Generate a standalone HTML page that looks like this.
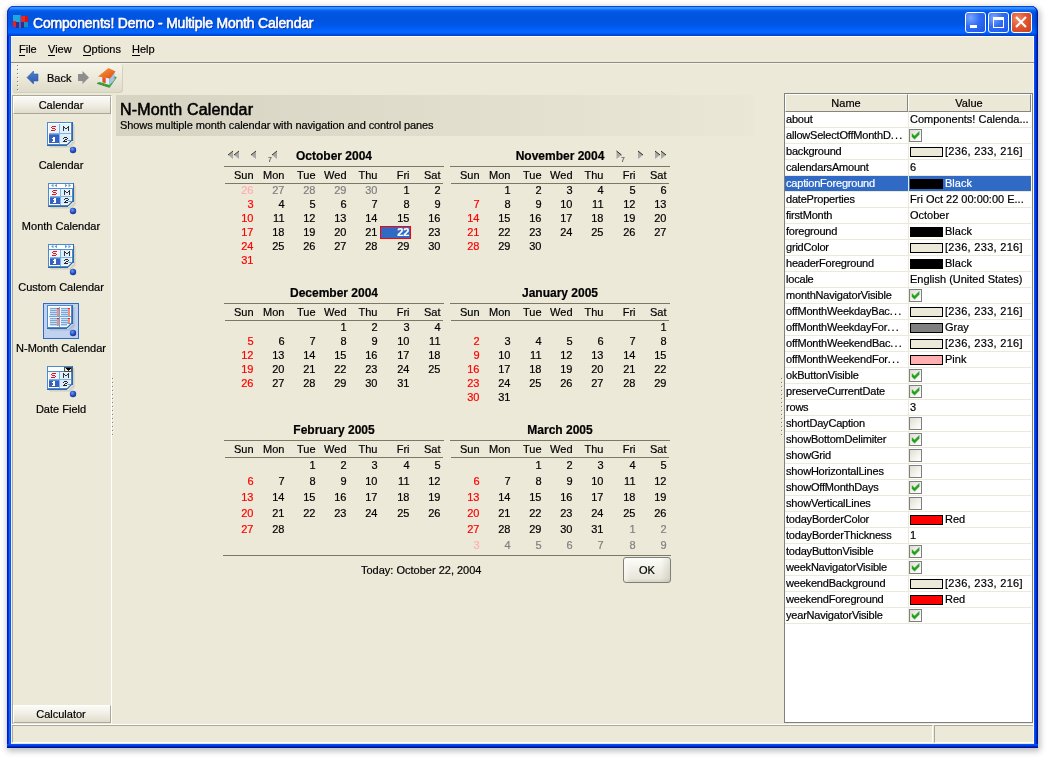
<!DOCTYPE html>
<html><head><meta charset="utf-8">
<style>
*{margin:0;padding:0;box-sizing:border-box}
html,body{width:1048px;height:758px;overflow:hidden;background:#fff;font-family:"Liberation Sans",sans-serif;font-size:11px;color:#000}
.a{position:absolute}
.t{position:absolute;white-space:nowrap;-webkit-text-stroke:0.2px currentColor}
svg{position:absolute;overflow:visible}
</style></head><body><div style="position:absolute;left:0;top:0;width:1048px;height:758px;will-change:transform">

<div class="a" style="left:7px;top:6px;width:1031px;height:742px;background:#0054e3;border-radius:7px 7px 0 0;box-shadow:1px 2px 6px 1px rgba(0,0,0,0.28)"></div>
<div class="a" style="left:7px;top:30px;width:4px;height:718px;background:linear-gradient(to right,#0018d8 0,#0018d8 1px,#0030e8 1px,#0030e8 2px,#1466f6 2px,#1466f6 3px,#0856ec 3px)"></div>
<div class="a" style="left:1034px;top:30px;width:4px;height:718px;background:linear-gradient(to right,#0850f8 0,#0850f8 1px,#0040e8 1px,#0040e8 2px,#0028c0 2px,#0028c0 3px,#001294 3px)"></div>
<div class="a" style="left:7px;top:744px;width:1031px;height:4px;background:linear-gradient(to bottom,#0850f8 0,#0850f8 1px,#0040e8 1px,#0040e8 2px,#0028c0 2px,#0028c0 3px,#001294 3px)"></div>
<div class="a" style="left:7px;top:6px;width:1031px;height:30px;border-radius:7px 7px 0 0;box-shadow:inset 1px 0 0 #0a2ad0,inset -1px 0 0 #0018a8;background:linear-gradient(to bottom,#0048e6 0px,#0048e6 1px,#3a94ff 1px,#3a94ff 2px,#2a84fc 3px,#0c66f2 4px,#0058e8 6px,#0054e0 8px,#0054e0 15px,#0057e8 19px,#005ef5 22px,#0066ff 25px,#0066ff 27px,#0052e2 28px,#003cc8 30px)"></div>
<div class="a" style="left:1034px;top:12px;width:4px;height:24px;background:linear-gradient(to right,rgba(0,40,200,0) 0,rgba(0,20,150,0.6) 4px)"></div>
<div class="a" style="left:11px;top:36px;width:1023px;height:708px;background:#ece9d8;border-left:1px solid #f4f1e2;border-right:1px solid #fbf9ee"></div>

<svg style="left:13px;top:15px" width="16" height="14" viewBox="0 0 16 14">
<rect x="0" y="0" width="7.5" height="7.5" fill="#1ea6de"/><rect x="8" y="1" width="7" height="6" fill="#f02424"/><rect x="12" y="1" width="3" height="6" fill="#c81818"/>
<rect x="0" y="6" width="3" height="6" fill="#ee1c1c"/><rect x="3" y="7" width="8" height="6" fill="#2a3090"/><rect x="6.5" y="7" width="1" height="6" fill="#8a90d0"/>
<rect x="11" y="7" width="4" height="5" fill="#1a8ec8"/></svg>
<div class="t" style="left:33px;top:15px;color:#fff;font-size:14px;line-height:17px;letter-spacing:-0.2px;-webkit-text-stroke:0.55px #fff;text-shadow:1px 1px 0 #0a2a9a">Components! Demo - Multiple Month Calendar</div>
<div class="a" style="left:965px;top:12px;width:21px;height:21px;border:1px solid #fff;border-radius:3px;background:radial-gradient(circle at 25% 25%,#7aa6ff 0,#2f6cf5 45%,#1d55e8 100%)"></div>
<div class="a" style="left:988px;top:12px;width:21px;height:21px;border:1px solid #fff;border-radius:3px;background:radial-gradient(circle at 25% 25%,#7aa6ff 0,#2f6cf5 45%,#1d55e8 100%)"></div>
<div class="a" style="left:1011px;top:12px;width:21px;height:21px;border:1px solid #fff;border-radius:3px;background:radial-gradient(circle at 30% 30%,#f08a6a 0,#e2562f 45%,#c8401c 100%)"></div>
<div class="a" style="left:970px;top:25px;width:7px;height:3px;background:#fff"></div>
<div class="a" style="left:993px;top:17px;width:11px;height:11px;border:1px solid #fff;border-top-width:3px"></div>
<svg style="left:1011px;top:12px" width="21" height="21" viewBox="0 0 21 21"><path d="M5.8 5.8 L14.2 14.2 M14.2 5.8 L5.8 14.2" stroke="#fff" stroke-width="2.2" stroke-linecap="square"/></svg>
<div class="a" style="left:11px;top:36px;width:1023px;height:1px;background:#fff"></div>
<div class="t" style="left:19px;top:42px;line-height:14px;">File</div>
<div class="a" style="left:19px;top:55px;width:6px;height:1px;background:#000"></div>
<div class="t" style="left:48px;top:42px;line-height:14px;">View</div>
<div class="a" style="left:48px;top:55px;width:7px;height:1px;background:#000"></div>
<div class="t" style="left:83px;top:42px;line-height:14px;">Options</div>
<div class="a" style="left:83px;top:55px;width:8px;height:1px;background:#000"></div>
<div class="t" style="left:132px;top:42px;line-height:14px;">Help</div>
<div class="a" style="left:132px;top:55px;width:8px;height:1px;background:#000"></div>
<div class="a" style="left:11px;top:62px;width:1023px;height:1px;background:#8f8d81"></div>
<div class="a" style="left:11px;top:63px;width:1023px;height:1px;background:#f4f3ee"></div>
<div class="a" style="left:12px;top:64px;width:111px;height:29px;border-radius:4px;background:linear-gradient(to bottom,#f5f4ea 0,#eeebdd 40%,#dedac8 100%);box-shadow:inset -1px -1px 0 #d4d0c0"></div>
<div class="a" style="left:17px;top:65px;width:1px;height:1px;background:#777"></div>
<div class="a" style="left:18px;top:66px;width:1px;height:1px;background:#fff"></div>
<div class="a" style="left:17px;top:69px;width:1px;height:1px;background:#777"></div>
<div class="a" style="left:18px;top:70px;width:1px;height:1px;background:#fff"></div>
<div class="a" style="left:17px;top:73px;width:1px;height:1px;background:#777"></div>
<div class="a" style="left:18px;top:74px;width:1px;height:1px;background:#fff"></div>
<div class="a" style="left:17px;top:77px;width:1px;height:1px;background:#777"></div>
<div class="a" style="left:18px;top:78px;width:1px;height:1px;background:#fff"></div>
<div class="a" style="left:17px;top:81px;width:1px;height:1px;background:#777"></div>
<div class="a" style="left:18px;top:82px;width:1px;height:1px;background:#fff"></div>
<div class="a" style="left:17px;top:85px;width:1px;height:1px;background:#777"></div>
<div class="a" style="left:18px;top:86px;width:1px;height:1px;background:#fff"></div>
<div class="a" style="left:17px;top:89px;width:1px;height:1px;background:#777"></div>
<div class="a" style="left:18px;top:90px;width:1px;height:1px;background:#fff"></div>
<svg style="left:26px;top:70px" width="14" height="16" viewBox="0 0 14 16"><defs><linearGradient id="ab" x1="0" y1="0" x2="0" y2="1"><stop offset="0" stop-color="#4a7fd0"/><stop offset="1" stop-color="#2d5aa8"/></linearGradient></defs><path d="M1 7.5 L7.5 1 L7.5 4 L12 4 L12 11 L7.5 11 L7.5 14 Z" fill="url(#ab)" stroke="#2d5aa8" stroke-width="0.6"/></svg>
<div class="t" style="left:47px;top:71px;line-height:14px;">Back</div>
<svg style="left:77px;top:70px" width="14" height="16" viewBox="0 0 14 16"><path d="M1 4 L5.5 4 L5.5 1 L12 7.5 L5.5 14 L5.5 11 L1 11 Z" fill="#8e8e8e"/></svg>
<svg style="left:96px;top:66px" width="22" height="22" viewBox="0 0 22 22">
<defs><linearGradient id="roof" x1="0" y1="0" x2="1" y2="1"><stop offset="0" stop-color="#f8a040"/><stop offset="1" stop-color="#e04a10"/></linearGradient></defs>
<path d="M1 17 L13.5 21 L20.5 11 L17 10 Z" fill="#2ea52e"/><path d="M1 17 L13.5 21 L13.5 21.8 L1 17.8 Z" fill="#157015"/><path d="M13.5 21 L20.5 11 L20.5 11.8 L13.5 21.8 Z" fill="#1a7a1a"/>
<path d="M3.5 10 L13.5 12 L13.5 19 L3.5 16 Z" fill="#e4ebfa"/>
<path d="M13.5 12 L18.5 6 L18.5 14 L13.5 19 Z" fill="#a9c2ea"/>
<path d="M6.4 11 L9.7 11.6 L9.7 17.2 L6.4 16.4 Z" fill="#ea5412"/>
<path d="M2 10.5 L12.5 2 L19.5 5.5 L14 12.5 Z" fill="url(#roof)"/>
</svg>
<div class="a" style="left:12px;top:95px;width:100px;height:630px;border-left:1px solid #aca899;border-top:1px solid #aca899;border-right:1px solid #fff;border-bottom:1px solid #fff"></div>
<div class="a" style="left:13px;top:96px;width:98px;height:18px;border-top:1px solid #fff;border-left:1px solid #fff;border-bottom:1px solid #aca899;border-right:1px solid #aca899;background:linear-gradient(to bottom,#fbfaf6 0,#f0eee4 50%,#e0dccb 100%)"></div>
<div class="t" style="left:12.0px;width:98px;top:98px;text-align:center;line-height:14px;">Calendar</div>
<div class="a" style="left:13px;top:705px;width:98px;height:18px;border-top:1px solid #fff;border-left:1px solid #fff;border-bottom:1px solid #aca899;border-right:1px solid #aca899;background:linear-gradient(to bottom,#fbfaf6 0,#f0eee4 50%,#e0dccb 100%)"></div>
<div class="t" style="left:12.0px;width:98px;top:707px;text-align:center;line-height:14px;">Calculator</div>
<svg style="left:46px;top:121px" width="30" height="28" viewBox="-1 -1 30 28" shape-rendering="crispEdges"><path d="M2 24 H21 L26 19 V2 H27 V20 L22 25 H2 Z" fill="#000" opacity="0.10"/><path d="M3 25 H22 L27 20 V3 H28 V21 L23 26 H3 Z" fill="#000" opacity="0.06"/><path d="M0 0 H26 V18 L20 24 H0 Z" fill="#2f6aa8"/><path d="M0 0 H25 V18 L20 23 H0 Z" fill="#4a8ad0"/><path d="M1 1 H24 V18 L20 22 H1 Z" fill="#ffffff"/><path d="M2 2 H23 V18 L20 21 H2 Z" fill="#eaf4fc"/><rect x="13" y="2" width="10" height="9" fill="#e2f0fb"/><rect x="13" y="12" width="10" height="9" fill="#dcecfa"/><rect x="12" y="2" width="1" height="20" fill="#7db4e2"/><rect x="2" y="11" width="22" height="1" fill="#7db4e2"/><rect x="2" y="12" width="10" height="9" fill="#3562c0"/><rect x="2" y="12" width="10" height="1" fill="#5a86d8"/><rect x="5" y="4" width="1" height="1" fill="#ee1010"/><rect x="6" y="4" width="1" height="1" fill="#ee1010"/><rect x="7" y="4" width="1" height="1" fill="#ee1010"/><rect x="8" y="4" width="1" height="1" fill="#ee1010"/><rect x="4" y="5" width="1" height="1" fill="#ee1010"/><rect x="5" y="6" width="1" height="1" fill="#ee1010"/><rect x="6" y="6" width="1" height="1" fill="#ee1010"/><rect x="7" y="6" width="1" height="1" fill="#ee1010"/><rect x="8" y="7" width="1" height="1" fill="#ee1010"/><rect x="4" y="8" width="1" height="1" fill="#ee1010"/><rect x="5" y="8" width="1" height="1" fill="#ee1010"/><rect x="6" y="8" width="1" height="1" fill="#ee1010"/><rect x="7" y="8" width="1" height="1" fill="#ee1010"/><rect x="16" y="4" width="1" height="1" fill="#333333"/><rect x="21" y="4" width="1" height="1" fill="#333333"/><rect x="16" y="5" width="1" height="1" fill="#333333"/><rect x="17" y="5" width="1" height="1" fill="#333333"/><rect x="20" y="5" width="1" height="1" fill="#333333"/><rect x="21" y="5" width="1" height="1" fill="#333333"/><rect x="16" y="6" width="1" height="1" fill="#333333"/><rect x="18" y="6" width="1" height="1" fill="#333333"/><rect x="19" y="6" width="1" height="1" fill="#333333"/><rect x="21" y="6" width="1" height="1" fill="#333333"/><rect x="16" y="7" width="1" height="1" fill="#333333"/><rect x="21" y="7" width="1" height="1" fill="#333333"/><rect x="16" y="8" width="1" height="1" fill="#333333"/><rect x="21" y="8" width="1" height="1" fill="#333333"/><rect x="6" y="15" width="1" height="1" fill="#ffffff"/><rect x="7" y="15" width="1" height="1" fill="#ffffff"/><rect x="5" y="16" width="1" height="1" fill="#ffffff"/><rect x="6" y="16" width="1" height="1" fill="#ffffff"/><rect x="7" y="16" width="1" height="1" fill="#ffffff"/><rect x="6" y="17" width="1" height="1" fill="#ffffff"/><rect x="7" y="17" width="1" height="1" fill="#ffffff"/><rect x="6" y="18" width="1" height="1" fill="#ffffff"/><rect x="7" y="18" width="1" height="1" fill="#ffffff"/><rect x="5" y="19" width="1" height="1" fill="#ffffff"/><rect x="6" y="19" width="1" height="1" fill="#ffffff"/><rect x="7" y="19" width="1" height="1" fill="#ffffff"/><rect x="17" y="15" width="1" height="1" fill="#222222"/><rect x="18" y="15" width="1" height="1" fill="#222222"/><rect x="19" y="15" width="1" height="1" fill="#222222"/><rect x="16" y="16" width="1" height="1" fill="#222222"/><rect x="20" y="16" width="1" height="1" fill="#222222"/><rect x="18" y="17" width="1" height="1" fill="#222222"/><rect x="19" y="17" width="1" height="1" fill="#222222"/><rect x="17" y="18" width="1" height="1" fill="#222222"/><rect x="16" y="19" width="1" height="1" fill="#222222"/><rect x="17" y="19" width="1" height="1" fill="#222222"/><rect x="18" y="19" width="1" height="1" fill="#222222"/><rect x="19" y="19" width="1" height="1" fill="#222222"/><rect x="20" y="19" width="1" height="1" fill="#222222"/><path d="M20 24 L20 19 L25 19 Z" fill="#ffffff"/><path d="M20 23 L25 18" stroke="#2f6aa8" stroke-width="1.2" shape-rendering="auto"/><path d="M20.5 18.5 H24" stroke="#6a9ad0" stroke-width="1" shape-rendering="auto"/></svg>
<svg style="left:69px;top:146px" width="8" height="8" viewBox="0 0 8 8"><defs><radialGradient id="dg73150" cx="0.4" cy="0.35" r="0.6"><stop offset="0" stop-color="#6f9cf0"/><stop offset="0.6" stop-color="#2a56c8"/><stop offset="1" stop-color="#1a3aa0"/></radialGradient></defs><circle cx="4" cy="4" r="3.2" fill="url(#dg73150)"/></svg>
<div class="t" style="left:12.0px;width:98px;top:158px;text-align:center;line-height:14px;">Calendar</div>
<svg style="left:47px;top:182px" width="30" height="28" viewBox="-1 -1 30 28" shape-rendering="crispEdges"><path d="M2 24 H21 L26 19 V2 H27 V20 L22 25 H2 Z" fill="#000" opacity="0.10"/><path d="M3 25 H22 L27 20 V3 H28 V21 L23 26 H3 Z" fill="#000" opacity="0.06"/><path d="M0 0 H26 V18 L20 24 H0 Z" fill="#2f6aa8"/><path d="M0 0 H25 V18 L20 23 H0 Z" fill="#4a8ad0"/><path d="M1 1 H24 V18 L20 22 H1 Z" fill="#ffffff"/><path d="M2 2 H23 V18 L20 21 H2 Z" fill="#eaf4fc"/><rect x="1" y="1" width="24" height="4" fill="#ffffff"/><path d="M3 2.5 L5.5 0.8 L5.5 4.2 Z M6.5 2.5 L9 0.8 L9 4.2 Z M17 0.8 L19.5 2.5 L17 4.2 Z M20.5 0.8 L23 2.5 L20.5 4.2 Z" fill="#6c9bd2" shape-rendering="auto"/><rect x="1" y="5" width="24" height="1" fill="#4f8fd0"/><rect x="13" y="6" width="10" height="7" fill="#e2f0fb"/><rect x="13" y="14" width="10" height="7" fill="#dcecfa"/><rect x="12" y="6" width="1" height="16" fill="#7db4e2"/><rect x="2" y="13" width="22" height="1" fill="#7db4e2"/><rect x="2" y="14" width="10" height="7" fill="#3562c0"/><rect x="2" y="14" width="10" height="1" fill="#5a86d8"/><rect x="5" y="7" width="1" height="1" fill="#ee1010"/><rect x="6" y="7" width="1" height="1" fill="#ee1010"/><rect x="7" y="7" width="1" height="1" fill="#ee1010"/><rect x="8" y="7" width="1" height="1" fill="#ee1010"/><rect x="4" y="8" width="1" height="1" fill="#ee1010"/><rect x="5" y="9" width="1" height="1" fill="#ee1010"/><rect x="6" y="9" width="1" height="1" fill="#ee1010"/><rect x="7" y="9" width="1" height="1" fill="#ee1010"/><rect x="8" y="10" width="1" height="1" fill="#ee1010"/><rect x="4" y="11" width="1" height="1" fill="#ee1010"/><rect x="5" y="11" width="1" height="1" fill="#ee1010"/><rect x="6" y="11" width="1" height="1" fill="#ee1010"/><rect x="7" y="11" width="1" height="1" fill="#ee1010"/><rect x="16" y="7" width="1" height="1" fill="#333333"/><rect x="21" y="7" width="1" height="1" fill="#333333"/><rect x="16" y="8" width="1" height="1" fill="#333333"/><rect x="17" y="8" width="1" height="1" fill="#333333"/><rect x="20" y="8" width="1" height="1" fill="#333333"/><rect x="21" y="8" width="1" height="1" fill="#333333"/><rect x="16" y="9" width="1" height="1" fill="#333333"/><rect x="18" y="9" width="1" height="1" fill="#333333"/><rect x="19" y="9" width="1" height="1" fill="#333333"/><rect x="21" y="9" width="1" height="1" fill="#333333"/><rect x="16" y="10" width="1" height="1" fill="#333333"/><rect x="21" y="10" width="1" height="1" fill="#333333"/><rect x="16" y="11" width="1" height="1" fill="#333333"/><rect x="21" y="11" width="1" height="1" fill="#333333"/><rect x="6" y="15" width="1" height="1" fill="#ffffff"/><rect x="7" y="15" width="1" height="1" fill="#ffffff"/><rect x="5" y="16" width="1" height="1" fill="#ffffff"/><rect x="6" y="16" width="1" height="1" fill="#ffffff"/><rect x="7" y="16" width="1" height="1" fill="#ffffff"/><rect x="6" y="17" width="1" height="1" fill="#ffffff"/><rect x="7" y="17" width="1" height="1" fill="#ffffff"/><rect x="6" y="18" width="1" height="1" fill="#ffffff"/><rect x="7" y="18" width="1" height="1" fill="#ffffff"/><rect x="5" y="19" width="1" height="1" fill="#ffffff"/><rect x="6" y="19" width="1" height="1" fill="#ffffff"/><rect x="7" y="19" width="1" height="1" fill="#ffffff"/><rect x="17" y="15" width="1" height="1" fill="#222222"/><rect x="18" y="15" width="1" height="1" fill="#222222"/><rect x="19" y="15" width="1" height="1" fill="#222222"/><rect x="16" y="16" width="1" height="1" fill="#222222"/><rect x="20" y="16" width="1" height="1" fill="#222222"/><rect x="18" y="17" width="1" height="1" fill="#222222"/><rect x="19" y="17" width="1" height="1" fill="#222222"/><rect x="17" y="18" width="1" height="1" fill="#222222"/><rect x="16" y="19" width="1" height="1" fill="#222222"/><rect x="17" y="19" width="1" height="1" fill="#222222"/><rect x="18" y="19" width="1" height="1" fill="#222222"/><rect x="19" y="19" width="1" height="1" fill="#222222"/><rect x="20" y="19" width="1" height="1" fill="#222222"/><path d="M20 24 L20 19 L25 19 Z" fill="#ffffff"/><path d="M20 23 L25 18" stroke="#2f6aa8" stroke-width="1.2" shape-rendering="auto"/><path d="M20.5 18.5 H24" stroke="#6a9ad0" stroke-width="1" shape-rendering="auto"/></svg>
<svg style="left:69px;top:207px" width="8" height="8" viewBox="0 0 8 8"><defs><radialGradient id="dg73211" cx="0.4" cy="0.35" r="0.6"><stop offset="0" stop-color="#6f9cf0"/><stop offset="0.6" stop-color="#2a56c8"/><stop offset="1" stop-color="#1a3aa0"/></radialGradient></defs><circle cx="4" cy="4" r="3.2" fill="url(#dg73211)"/></svg>
<div class="t" style="left:12.0px;width:98px;top:219px;text-align:center;line-height:14px;">Month Calendar</div>
<svg style="left:47px;top:243px" width="30" height="28" viewBox="-1 -1 30 28" shape-rendering="crispEdges"><path d="M2 24 H21 L26 19 V2 H27 V20 L22 25 H2 Z" fill="#000" opacity="0.10"/><path d="M3 25 H22 L27 20 V3 H28 V21 L23 26 H3 Z" fill="#000" opacity="0.06"/><path d="M0 0 H26 V18 L20 24 H0 Z" fill="#2f6aa8"/><path d="M0 0 H25 V18 L20 23 H0 Z" fill="#4a8ad0"/><path d="M1 1 H24 V18 L20 22 H1 Z" fill="#ffffff"/><path d="M2 2 H23 V18 L20 21 H2 Z" fill="#eaf4fc"/><rect x="1" y="1" width="24" height="4" fill="#ffffff"/><path d="M3 2.5 L5.5 0.8 L5.5 4.2 Z M6.5 2.5 L9 0.8 L9 4.2 Z M17 0.8 L19.5 2.5 L17 4.2 Z M20.5 0.8 L23 2.5 L20.5 4.2 Z" fill="#6c9bd2" shape-rendering="auto"/><rect x="1" y="5" width="24" height="1" fill="#4f8fd0"/><rect x="13" y="6" width="10" height="7" fill="#e2f0fb"/><rect x="13" y="14" width="10" height="7" fill="#dcecfa"/><rect x="12" y="6" width="1" height="16" fill="#7db4e2"/><rect x="2" y="13" width="22" height="1" fill="#7db4e2"/><rect x="2" y="14" width="10" height="7" fill="#3562c0"/><rect x="2" y="14" width="10" height="1" fill="#5a86d8"/><rect x="5" y="7" width="1" height="1" fill="#ee1010"/><rect x="6" y="7" width="1" height="1" fill="#ee1010"/><rect x="7" y="7" width="1" height="1" fill="#ee1010"/><rect x="8" y="7" width="1" height="1" fill="#ee1010"/><rect x="4" y="8" width="1" height="1" fill="#ee1010"/><rect x="5" y="9" width="1" height="1" fill="#ee1010"/><rect x="6" y="9" width="1" height="1" fill="#ee1010"/><rect x="7" y="9" width="1" height="1" fill="#ee1010"/><rect x="8" y="10" width="1" height="1" fill="#ee1010"/><rect x="4" y="11" width="1" height="1" fill="#ee1010"/><rect x="5" y="11" width="1" height="1" fill="#ee1010"/><rect x="6" y="11" width="1" height="1" fill="#ee1010"/><rect x="7" y="11" width="1" height="1" fill="#ee1010"/><rect x="16" y="7" width="1" height="1" fill="#333333"/><rect x="21" y="7" width="1" height="1" fill="#333333"/><rect x="16" y="8" width="1" height="1" fill="#333333"/><rect x="17" y="8" width="1" height="1" fill="#333333"/><rect x="20" y="8" width="1" height="1" fill="#333333"/><rect x="21" y="8" width="1" height="1" fill="#333333"/><rect x="16" y="9" width="1" height="1" fill="#333333"/><rect x="18" y="9" width="1" height="1" fill="#333333"/><rect x="19" y="9" width="1" height="1" fill="#333333"/><rect x="21" y="9" width="1" height="1" fill="#333333"/><rect x="16" y="10" width="1" height="1" fill="#333333"/><rect x="21" y="10" width="1" height="1" fill="#333333"/><rect x="16" y="11" width="1" height="1" fill="#333333"/><rect x="21" y="11" width="1" height="1" fill="#333333"/><rect x="6" y="15" width="1" height="1" fill="#ffffff"/><rect x="7" y="15" width="1" height="1" fill="#ffffff"/><rect x="5" y="16" width="1" height="1" fill="#ffffff"/><rect x="6" y="16" width="1" height="1" fill="#ffffff"/><rect x="7" y="16" width="1" height="1" fill="#ffffff"/><rect x="6" y="17" width="1" height="1" fill="#ffffff"/><rect x="7" y="17" width="1" height="1" fill="#ffffff"/><rect x="6" y="18" width="1" height="1" fill="#ffffff"/><rect x="7" y="18" width="1" height="1" fill="#ffffff"/><rect x="5" y="19" width="1" height="1" fill="#ffffff"/><rect x="6" y="19" width="1" height="1" fill="#ffffff"/><rect x="7" y="19" width="1" height="1" fill="#ffffff"/><rect x="17" y="15" width="1" height="1" fill="#222222"/><rect x="18" y="15" width="1" height="1" fill="#222222"/><rect x="19" y="15" width="1" height="1" fill="#222222"/><rect x="16" y="16" width="1" height="1" fill="#222222"/><rect x="20" y="16" width="1" height="1" fill="#222222"/><rect x="18" y="17" width="1" height="1" fill="#222222"/><rect x="19" y="17" width="1" height="1" fill="#222222"/><rect x="17" y="18" width="1" height="1" fill="#222222"/><rect x="16" y="19" width="1" height="1" fill="#222222"/><rect x="17" y="19" width="1" height="1" fill="#222222"/><rect x="18" y="19" width="1" height="1" fill="#222222"/><rect x="19" y="19" width="1" height="1" fill="#222222"/><rect x="20" y="19" width="1" height="1" fill="#222222"/><path d="M20 24 L20 19 L25 19 Z" fill="#ffffff"/><path d="M20 23 L25 18" stroke="#2f6aa8" stroke-width="1.2" shape-rendering="auto"/><path d="M20.5 18.5 H24" stroke="#6a9ad0" stroke-width="1" shape-rendering="auto"/></svg>
<svg style="left:69px;top:268px" width="8" height="8" viewBox="0 0 8 8"><defs><radialGradient id="dg73272" cx="0.4" cy="0.35" r="0.6"><stop offset="0" stop-color="#6f9cf0"/><stop offset="0.6" stop-color="#2a56c8"/><stop offset="1" stop-color="#1a3aa0"/></radialGradient></defs><circle cx="4" cy="4" r="3.2" fill="url(#dg73272)"/></svg>
<div class="t" style="left:12.0px;width:98px;top:280px;text-align:center;line-height:14px;">Custom Calendar</div>
<div class="a" style="left:43px;top:303px;width:36px;height:36px;background:#c1d2ee;border:1px solid #316ac5"></div>
<svg style="left:46px;top:304px" width="30" height="28" viewBox="-1 -1 30 28" shape-rendering="crispEdges"><path d="M2 24 H21 L26 19 V2 H27 V20 L22 25 H2 Z" fill="#000" opacity="0.10"/><path d="M3 25 H22 L27 20 V3 H28 V21 L23 26 H3 Z" fill="#000" opacity="0.06"/><path d="M0 0 H26 V18 L20 24 H0 Z" fill="#2f6aa8"/><path d="M0 0 H25 V18 L20 23 H0 Z" fill="#4a8ad0"/><path d="M1 1 H24 V18 L20 22 H1 Z" fill="#ffffff"/><path d="M2 2 H23 V18 L20 21 H2 Z" fill="#eaf4fc"/><rect x="12" y="2" width="1" height="20" fill="#6aa6dc"/><rect x="2" y="11" width="22" height="1" fill="#6aa6dc"/><rect x="3" y="3" width="7" height="1" fill="#7fa8d4"/><rect x="3" y="4" width="7" height="1" fill="#c4dcf0"/><rect x="3" y="5" width="7" height="1" fill="#7fa8d4"/><rect x="3" y="6" width="7" height="1" fill="#c4dcf0"/><rect x="3" y="7" width="7" height="1" fill="#7fa8d4"/><rect x="3" y="8" width="7" height="1" fill="#c4dcf0"/><rect x="3" y="9" width="7" height="1" fill="#7fa8d4"/><rect x="3" y="10" width="7" height="1" fill="#c4dcf0"/><rect x="10" y="3" width="2" height="8" fill="#f88a7a"/><rect x="10" y="3" width="2" height="1" fill="#ee2020"/><rect x="14" y="3" width="7" height="1" fill="#7fa8d4"/><rect x="14" y="4" width="7" height="1" fill="#c4dcf0"/><rect x="14" y="5" width="7" height="1" fill="#7fa8d4"/><rect x="14" y="6" width="7" height="1" fill="#c4dcf0"/><rect x="14" y="7" width="7" height="1" fill="#7fa8d4"/><rect x="14" y="8" width="7" height="1" fill="#c4dcf0"/><rect x="14" y="9" width="7" height="1" fill="#7fa8d4"/><rect x="14" y="10" width="7" height="1" fill="#c4dcf0"/><rect x="21" y="3" width="2" height="8" fill="#f88a7a"/><rect x="21" y="3" width="2" height="1" fill="#ee2020"/><rect x="3" y="13" width="7" height="1" fill="#7fa8d4"/><rect x="3" y="14" width="7" height="1" fill="#c4dcf0"/><rect x="3" y="15" width="7" height="1" fill="#7fa8d4"/><rect x="3" y="16" width="7" height="1" fill="#c4dcf0"/><rect x="3" y="17" width="7" height="1" fill="#7fa8d4"/><rect x="3" y="18" width="7" height="1" fill="#c4dcf0"/><rect x="3" y="19" width="7" height="1" fill="#7fa8d4"/><rect x="3" y="20" width="7" height="1" fill="#c4dcf0"/><rect x="10" y="13" width="2" height="8" fill="#f88a7a"/><rect x="10" y="13" width="2" height="1" fill="#ee2020"/><rect x="14" y="13" width="7" height="1" fill="#7fa8d4"/><rect x="14" y="14" width="7" height="1" fill="#c4dcf0"/><rect x="14" y="15" width="7" height="1" fill="#7fa8d4"/><rect x="14" y="16" width="7" height="1" fill="#c4dcf0"/><rect x="14" y="17" width="7" height="1" fill="#7fa8d4"/><rect x="14" y="18" width="7" height="1" fill="#c4dcf0"/><rect x="14" y="19" width="7" height="1" fill="#7fa8d4"/><rect x="14" y="20" width="7" height="1" fill="#c4dcf0"/><rect x="21" y="13" width="2" height="8" fill="#f88a7a"/><rect x="21" y="13" width="2" height="1" fill="#ee2020"/><path d="M20 24 L20 19 L25 19 Z" fill="#ffffff"/><path d="M20 23 L25 18" stroke="#2f6aa8" stroke-width="1.2" shape-rendering="auto"/><path d="M20.5 18.5 H24" stroke="#6a9ad0" stroke-width="1" shape-rendering="auto"/></svg>
<svg style="left:69px;top:329px" width="8" height="8" viewBox="0 0 8 8"><defs><radialGradient id="dg73333" cx="0.4" cy="0.35" r="0.6"><stop offset="0" stop-color="#6f9cf0"/><stop offset="0.6" stop-color="#2a56c8"/><stop offset="1" stop-color="#1a3aa0"/></radialGradient></defs><circle cx="4" cy="4" r="3.2" fill="url(#dg73333)"/></svg>
<div class="t" style="left:12.0px;width:98px;top:341px;text-align:center;line-height:14px;">N-Month Calendar</div>
<svg style="left:46px;top:365px" width="30" height="28" viewBox="-1 -1 30 28" shape-rendering="crispEdges"><path d="M2 24 H21 L26 19 V2 H27 V20 L22 25 H2 Z" fill="#000" opacity="0.10"/><path d="M3 25 H22 L27 20 V3 H28 V21 L23 26 H3 Z" fill="#000" opacity="0.06"/><path d="M0 0 H26 V18 L20 24 H0 Z" fill="#2f6aa8"/><path d="M0 0 H25 V18 L20 23 H0 Z" fill="#4a8ad0"/><path d="M1 1 H24 V18 L20 22 H1 Z" fill="#ffffff"/><path d="M2 2 H23 V18 L20 21 H2 Z" fill="#eaf4fc"/><rect x="1" y="1" width="24" height="4" fill="#ffffff"/><rect x="17" y="1" width="8" height="5" fill="#505050"/><rect x="18" y="2" width="6" height="3" fill="#e4e4de"/><rect x="19" y="2" width="5" height="1" fill="#000"/><rect x="20" y="3" width="3" height="1" fill="#000"/><rect x="21" y="4" width="1" height="1" fill="#222"/><rect x="1" y="5" width="16" height="1" fill="#4f8fd0"/><rect x="13" y="6" width="10" height="7" fill="#e2f0fb"/><rect x="13" y="14" width="10" height="7" fill="#dcecfa"/><rect x="12" y="6" width="1" height="16" fill="#7db4e2"/><rect x="2" y="13" width="22" height="1" fill="#7db4e2"/><rect x="2" y="14" width="10" height="7" fill="#3562c0"/><rect x="2" y="14" width="10" height="1" fill="#5a86d8"/><rect x="5" y="7" width="1" height="1" fill="#ee1010"/><rect x="6" y="7" width="1" height="1" fill="#ee1010"/><rect x="7" y="7" width="1" height="1" fill="#ee1010"/><rect x="8" y="7" width="1" height="1" fill="#ee1010"/><rect x="4" y="8" width="1" height="1" fill="#ee1010"/><rect x="5" y="9" width="1" height="1" fill="#ee1010"/><rect x="6" y="9" width="1" height="1" fill="#ee1010"/><rect x="7" y="9" width="1" height="1" fill="#ee1010"/><rect x="8" y="10" width="1" height="1" fill="#ee1010"/><rect x="4" y="11" width="1" height="1" fill="#ee1010"/><rect x="5" y="11" width="1" height="1" fill="#ee1010"/><rect x="6" y="11" width="1" height="1" fill="#ee1010"/><rect x="7" y="11" width="1" height="1" fill="#ee1010"/><rect x="16" y="7" width="1" height="1" fill="#333333"/><rect x="21" y="7" width="1" height="1" fill="#333333"/><rect x="16" y="8" width="1" height="1" fill="#333333"/><rect x="17" y="8" width="1" height="1" fill="#333333"/><rect x="20" y="8" width="1" height="1" fill="#333333"/><rect x="21" y="8" width="1" height="1" fill="#333333"/><rect x="16" y="9" width="1" height="1" fill="#333333"/><rect x="18" y="9" width="1" height="1" fill="#333333"/><rect x="19" y="9" width="1" height="1" fill="#333333"/><rect x="21" y="9" width="1" height="1" fill="#333333"/><rect x="16" y="10" width="1" height="1" fill="#333333"/><rect x="21" y="10" width="1" height="1" fill="#333333"/><rect x="16" y="11" width="1" height="1" fill="#333333"/><rect x="21" y="11" width="1" height="1" fill="#333333"/><rect x="6" y="15" width="1" height="1" fill="#ffffff"/><rect x="7" y="15" width="1" height="1" fill="#ffffff"/><rect x="5" y="16" width="1" height="1" fill="#ffffff"/><rect x="6" y="16" width="1" height="1" fill="#ffffff"/><rect x="7" y="16" width="1" height="1" fill="#ffffff"/><rect x="6" y="17" width="1" height="1" fill="#ffffff"/><rect x="7" y="17" width="1" height="1" fill="#ffffff"/><rect x="6" y="18" width="1" height="1" fill="#ffffff"/><rect x="7" y="18" width="1" height="1" fill="#ffffff"/><rect x="5" y="19" width="1" height="1" fill="#ffffff"/><rect x="6" y="19" width="1" height="1" fill="#ffffff"/><rect x="7" y="19" width="1" height="1" fill="#ffffff"/><rect x="17" y="15" width="1" height="1" fill="#222222"/><rect x="18" y="15" width="1" height="1" fill="#222222"/><rect x="19" y="15" width="1" height="1" fill="#222222"/><rect x="16" y="16" width="1" height="1" fill="#222222"/><rect x="20" y="16" width="1" height="1" fill="#222222"/><rect x="18" y="17" width="1" height="1" fill="#222222"/><rect x="19" y="17" width="1" height="1" fill="#222222"/><rect x="17" y="18" width="1" height="1" fill="#222222"/><rect x="16" y="19" width="1" height="1" fill="#222222"/><rect x="17" y="19" width="1" height="1" fill="#222222"/><rect x="18" y="19" width="1" height="1" fill="#222222"/><rect x="19" y="19" width="1" height="1" fill="#222222"/><rect x="20" y="19" width="1" height="1" fill="#222222"/><path d="M20 24 L20 19 L25 19 Z" fill="#ffffff"/><path d="M20 23 L25 18" stroke="#2f6aa8" stroke-width="1.2" shape-rendering="auto"/><path d="M20.5 18.5 H24" stroke="#6a9ad0" stroke-width="1" shape-rendering="auto"/></svg>
<svg style="left:69px;top:390px" width="8" height="8" viewBox="0 0 8 8"><defs><radialGradient id="dg73394" cx="0.4" cy="0.35" r="0.6"><stop offset="0" stop-color="#6f9cf0"/><stop offset="0.6" stop-color="#2a56c8"/><stop offset="1" stop-color="#1a3aa0"/></radialGradient></defs><circle cx="4" cy="4" r="3.2" fill="url(#dg73394)"/></svg>
<div class="t" style="left:12.0px;width:98px;top:402px;text-align:center;line-height:14px;">Date Field</div>
<div class="a" style="left:116px;top:95px;width:638px;height:41px;background:linear-gradient(to right,#d7d3c2 0,#eae7d6 100%)"></div>
<div class="t" style="left:120px;top:100px;font-size:16px;line-height:19px;letter-spacing:0.15px;-webkit-text-stroke:0.55px #000">N-Month Calendar</div>
<div class="t" style="left:120px;top:118px;line-height:14px;letter-spacing:-0.09px">Shows multiple month calendar with navigation and control panes</div>
<div class="t" style="left:234.0px;width:200px;top:149px;text-align:center;font-weight:bold;font-size:12px;line-height:15px;">October 2004</div>
<div class="a" style="left:224px;top:166px;width:220px;height:1px;background:#7b7868"></div>
<div class="t" style="right:794.5px;top:168px;text-align:right;line-height:14px;">Sun</div>
<div class="t" style="right:763.5px;top:168px;text-align:right;line-height:14px;">Mon</div>
<div class="t" style="right:732.5px;top:168px;text-align:right;line-height:14px;">Tue</div>
<div class="t" style="right:701.5px;top:168px;text-align:right;line-height:14px;">Wed</div>
<div class="t" style="right:670.5px;top:168px;text-align:right;line-height:14px;">Thu</div>
<div class="t" style="right:638.5px;top:168px;text-align:right;line-height:14px;">Fri</div>
<div class="t" style="right:607.5px;top:168px;text-align:right;line-height:14px;">Sat</div>
<div class="a" style="left:225px;top:183px;width:218px;height:1px;background:#7b7868"></div>
<div class="t" style="right:794.5px;top:183px;text-align:right;color:#ffafaf;line-height:14px;">26</div>
<div class="t" style="right:763.5px;top:183px;text-align:right;color:#808080;line-height:14px;">27</div>
<div class="t" style="right:732.5px;top:183px;text-align:right;color:#808080;line-height:14px;">28</div>
<div class="t" style="right:701.5px;top:183px;text-align:right;color:#808080;line-height:14px;">29</div>
<div class="t" style="right:670.5px;top:183px;text-align:right;color:#808080;line-height:14px;">30</div>
<div class="t" style="right:638.5px;top:183px;text-align:right;line-height:14px;">1</div>
<div class="t" style="right:607.5px;top:183px;text-align:right;line-height:14px;">2</div>
<div class="t" style="right:794.5px;top:197px;text-align:right;color:#f00;line-height:14px;">3</div>
<div class="t" style="right:763.5px;top:197px;text-align:right;line-height:14px;">4</div>
<div class="t" style="right:732.5px;top:197px;text-align:right;line-height:14px;">5</div>
<div class="t" style="right:701.5px;top:197px;text-align:right;line-height:14px;">6</div>
<div class="t" style="right:670.5px;top:197px;text-align:right;line-height:14px;">7</div>
<div class="t" style="right:638.5px;top:197px;text-align:right;line-height:14px;">8</div>
<div class="t" style="right:607.5px;top:197px;text-align:right;line-height:14px;">9</div>
<div class="t" style="right:794.5px;top:211px;text-align:right;color:#f00;line-height:14px;">10</div>
<div class="t" style="right:763.5px;top:211px;text-align:right;line-height:14px;">11</div>
<div class="t" style="right:732.5px;top:211px;text-align:right;line-height:14px;">12</div>
<div class="t" style="right:701.5px;top:211px;text-align:right;line-height:14px;">13</div>
<div class="t" style="right:670.5px;top:211px;text-align:right;line-height:14px;">14</div>
<div class="t" style="right:638.5px;top:211px;text-align:right;line-height:14px;">15</div>
<div class="t" style="right:607.5px;top:211px;text-align:right;line-height:14px;">16</div>
<div class="t" style="right:794.5px;top:225px;text-align:right;color:#f00;line-height:14px;">17</div>
<div class="t" style="right:763.5px;top:225px;text-align:right;line-height:14px;">18</div>
<div class="t" style="right:732.5px;top:225px;text-align:right;line-height:14px;">19</div>
<div class="t" style="right:701.5px;top:225px;text-align:right;line-height:14px;">20</div>
<div class="t" style="right:670.5px;top:225px;text-align:right;line-height:14px;">21</div>
<div class="a" style="left:380px;top:226px;width:31px;height:13px;background:#316ac5;border:1px solid #f00"></div>
<div class="t" style="right:638.5px;top:225px;text-align:right;color:#fff;font-weight:bold;line-height:14px;">22</div>
<div class="t" style="right:607.5px;top:225px;text-align:right;line-height:14px;">23</div>
<div class="t" style="right:794.5px;top:239px;text-align:right;color:#f00;line-height:14px;">24</div>
<div class="t" style="right:763.5px;top:239px;text-align:right;line-height:14px;">25</div>
<div class="t" style="right:732.5px;top:239px;text-align:right;line-height:14px;">26</div>
<div class="t" style="right:701.5px;top:239px;text-align:right;line-height:14px;">27</div>
<div class="t" style="right:670.5px;top:239px;text-align:right;line-height:14px;">28</div>
<div class="t" style="right:638.5px;top:239px;text-align:right;line-height:14px;">29</div>
<div class="t" style="right:607.5px;top:239px;text-align:right;line-height:14px;">30</div>
<div class="t" style="right:794.5px;top:253px;text-align:right;color:#f00;line-height:14px;">31</div>
<div class="t" style="left:460.0px;width:200px;top:149px;text-align:center;font-weight:bold;font-size:12px;line-height:15px;">November 2004</div>
<div class="a" style="left:450px;top:166px;width:220px;height:1px;background:#7b7868"></div>
<div class="t" style="right:568.5px;top:168px;text-align:right;line-height:14px;">Sun</div>
<div class="t" style="right:537.5px;top:168px;text-align:right;line-height:14px;">Mon</div>
<div class="t" style="right:506.5px;top:168px;text-align:right;line-height:14px;">Tue</div>
<div class="t" style="right:475.5px;top:168px;text-align:right;line-height:14px;">Wed</div>
<div class="t" style="right:444.5px;top:168px;text-align:right;line-height:14px;">Thu</div>
<div class="t" style="right:412.5px;top:168px;text-align:right;line-height:14px;">Fri</div>
<div class="t" style="right:381.5px;top:168px;text-align:right;line-height:14px;">Sat</div>
<div class="a" style="left:451px;top:183px;width:218px;height:1px;background:#7b7868"></div>
<div class="t" style="right:537.5px;top:183px;text-align:right;line-height:14px;">1</div>
<div class="t" style="right:506.5px;top:183px;text-align:right;line-height:14px;">2</div>
<div class="t" style="right:475.5px;top:183px;text-align:right;line-height:14px;">3</div>
<div class="t" style="right:444.5px;top:183px;text-align:right;line-height:14px;">4</div>
<div class="t" style="right:412.5px;top:183px;text-align:right;line-height:14px;">5</div>
<div class="t" style="right:381.5px;top:183px;text-align:right;line-height:14px;">6</div>
<div class="t" style="right:568.5px;top:197px;text-align:right;color:#f00;line-height:14px;">7</div>
<div class="t" style="right:537.5px;top:197px;text-align:right;line-height:14px;">8</div>
<div class="t" style="right:506.5px;top:197px;text-align:right;line-height:14px;">9</div>
<div class="t" style="right:475.5px;top:197px;text-align:right;line-height:14px;">10</div>
<div class="t" style="right:444.5px;top:197px;text-align:right;line-height:14px;">11</div>
<div class="t" style="right:412.5px;top:197px;text-align:right;line-height:14px;">12</div>
<div class="t" style="right:381.5px;top:197px;text-align:right;line-height:14px;">13</div>
<div class="t" style="right:568.5px;top:211px;text-align:right;color:#f00;line-height:14px;">14</div>
<div class="t" style="right:537.5px;top:211px;text-align:right;line-height:14px;">15</div>
<div class="t" style="right:506.5px;top:211px;text-align:right;line-height:14px;">16</div>
<div class="t" style="right:475.5px;top:211px;text-align:right;line-height:14px;">17</div>
<div class="t" style="right:444.5px;top:211px;text-align:right;line-height:14px;">18</div>
<div class="t" style="right:412.5px;top:211px;text-align:right;line-height:14px;">19</div>
<div class="t" style="right:381.5px;top:211px;text-align:right;line-height:14px;">20</div>
<div class="t" style="right:568.5px;top:225px;text-align:right;color:#f00;line-height:14px;">21</div>
<div class="t" style="right:537.5px;top:225px;text-align:right;line-height:14px;">22</div>
<div class="t" style="right:506.5px;top:225px;text-align:right;line-height:14px;">23</div>
<div class="t" style="right:475.5px;top:225px;text-align:right;line-height:14px;">24</div>
<div class="t" style="right:444.5px;top:225px;text-align:right;line-height:14px;">25</div>
<div class="t" style="right:412.5px;top:225px;text-align:right;line-height:14px;">26</div>
<div class="t" style="right:381.5px;top:225px;text-align:right;line-height:14px;">27</div>
<div class="t" style="right:568.5px;top:239px;text-align:right;color:#f00;line-height:14px;">28</div>
<div class="t" style="right:537.5px;top:239px;text-align:right;line-height:14px;">29</div>
<div class="t" style="right:506.5px;top:239px;text-align:right;line-height:14px;">30</div>
<div class="t" style="left:234.0px;width:200px;top:286px;text-align:center;font-weight:bold;font-size:12px;line-height:15px;">December 2004</div>
<div class="a" style="left:224px;top:303px;width:220px;height:1px;background:#7b7868"></div>
<div class="t" style="right:794.5px;top:305px;text-align:right;line-height:14px;">Sun</div>
<div class="t" style="right:763.5px;top:305px;text-align:right;line-height:14px;">Mon</div>
<div class="t" style="right:732.5px;top:305px;text-align:right;line-height:14px;">Tue</div>
<div class="t" style="right:701.5px;top:305px;text-align:right;line-height:14px;">Wed</div>
<div class="t" style="right:670.5px;top:305px;text-align:right;line-height:14px;">Thu</div>
<div class="t" style="right:638.5px;top:305px;text-align:right;line-height:14px;">Fri</div>
<div class="t" style="right:607.5px;top:305px;text-align:right;line-height:14px;">Sat</div>
<div class="a" style="left:225px;top:320px;width:218px;height:1px;background:#7b7868"></div>
<div class="t" style="right:701.5px;top:320px;text-align:right;line-height:14px;">1</div>
<div class="t" style="right:670.5px;top:320px;text-align:right;line-height:14px;">2</div>
<div class="t" style="right:638.5px;top:320px;text-align:right;line-height:14px;">3</div>
<div class="t" style="right:607.5px;top:320px;text-align:right;line-height:14px;">4</div>
<div class="t" style="right:794.5px;top:334px;text-align:right;color:#f00;line-height:14px;">5</div>
<div class="t" style="right:763.5px;top:334px;text-align:right;line-height:14px;">6</div>
<div class="t" style="right:732.5px;top:334px;text-align:right;line-height:14px;">7</div>
<div class="t" style="right:701.5px;top:334px;text-align:right;line-height:14px;">8</div>
<div class="t" style="right:670.5px;top:334px;text-align:right;line-height:14px;">9</div>
<div class="t" style="right:638.5px;top:334px;text-align:right;line-height:14px;">10</div>
<div class="t" style="right:607.5px;top:334px;text-align:right;line-height:14px;">11</div>
<div class="t" style="right:794.5px;top:348px;text-align:right;color:#f00;line-height:14px;">12</div>
<div class="t" style="right:763.5px;top:348px;text-align:right;line-height:14px;">13</div>
<div class="t" style="right:732.5px;top:348px;text-align:right;line-height:14px;">14</div>
<div class="t" style="right:701.5px;top:348px;text-align:right;line-height:14px;">15</div>
<div class="t" style="right:670.5px;top:348px;text-align:right;line-height:14px;">16</div>
<div class="t" style="right:638.5px;top:348px;text-align:right;line-height:14px;">17</div>
<div class="t" style="right:607.5px;top:348px;text-align:right;line-height:14px;">18</div>
<div class="t" style="right:794.5px;top:362px;text-align:right;color:#f00;line-height:14px;">19</div>
<div class="t" style="right:763.5px;top:362px;text-align:right;line-height:14px;">20</div>
<div class="t" style="right:732.5px;top:362px;text-align:right;line-height:14px;">21</div>
<div class="t" style="right:701.5px;top:362px;text-align:right;line-height:14px;">22</div>
<div class="t" style="right:670.5px;top:362px;text-align:right;line-height:14px;">23</div>
<div class="t" style="right:638.5px;top:362px;text-align:right;line-height:14px;">24</div>
<div class="t" style="right:607.5px;top:362px;text-align:right;line-height:14px;">25</div>
<div class="t" style="right:794.5px;top:376px;text-align:right;color:#f00;line-height:14px;">26</div>
<div class="t" style="right:763.5px;top:376px;text-align:right;line-height:14px;">27</div>
<div class="t" style="right:732.5px;top:376px;text-align:right;line-height:14px;">28</div>
<div class="t" style="right:701.5px;top:376px;text-align:right;line-height:14px;">29</div>
<div class="t" style="right:670.5px;top:376px;text-align:right;line-height:14px;">30</div>
<div class="t" style="right:638.5px;top:376px;text-align:right;line-height:14px;">31</div>
<div class="t" style="left:460.0px;width:200px;top:286px;text-align:center;font-weight:bold;font-size:12px;line-height:15px;">January 2005</div>
<div class="a" style="left:450px;top:303px;width:220px;height:1px;background:#7b7868"></div>
<div class="t" style="right:568.5px;top:305px;text-align:right;line-height:14px;">Sun</div>
<div class="t" style="right:537.5px;top:305px;text-align:right;line-height:14px;">Mon</div>
<div class="t" style="right:506.5px;top:305px;text-align:right;line-height:14px;">Tue</div>
<div class="t" style="right:475.5px;top:305px;text-align:right;line-height:14px;">Wed</div>
<div class="t" style="right:444.5px;top:305px;text-align:right;line-height:14px;">Thu</div>
<div class="t" style="right:412.5px;top:305px;text-align:right;line-height:14px;">Fri</div>
<div class="t" style="right:381.5px;top:305px;text-align:right;line-height:14px;">Sat</div>
<div class="a" style="left:451px;top:320px;width:218px;height:1px;background:#7b7868"></div>
<div class="t" style="right:381.5px;top:320px;text-align:right;line-height:14px;">1</div>
<div class="t" style="right:568.5px;top:334px;text-align:right;color:#f00;line-height:14px;">2</div>
<div class="t" style="right:537.5px;top:334px;text-align:right;line-height:14px;">3</div>
<div class="t" style="right:506.5px;top:334px;text-align:right;line-height:14px;">4</div>
<div class="t" style="right:475.5px;top:334px;text-align:right;line-height:14px;">5</div>
<div class="t" style="right:444.5px;top:334px;text-align:right;line-height:14px;">6</div>
<div class="t" style="right:412.5px;top:334px;text-align:right;line-height:14px;">7</div>
<div class="t" style="right:381.5px;top:334px;text-align:right;line-height:14px;">8</div>
<div class="t" style="right:568.5px;top:348px;text-align:right;color:#f00;line-height:14px;">9</div>
<div class="t" style="right:537.5px;top:348px;text-align:right;line-height:14px;">10</div>
<div class="t" style="right:506.5px;top:348px;text-align:right;line-height:14px;">11</div>
<div class="t" style="right:475.5px;top:348px;text-align:right;line-height:14px;">12</div>
<div class="t" style="right:444.5px;top:348px;text-align:right;line-height:14px;">13</div>
<div class="t" style="right:412.5px;top:348px;text-align:right;line-height:14px;">14</div>
<div class="t" style="right:381.5px;top:348px;text-align:right;line-height:14px;">15</div>
<div class="t" style="right:568.5px;top:362px;text-align:right;color:#f00;line-height:14px;">16</div>
<div class="t" style="right:537.5px;top:362px;text-align:right;line-height:14px;">17</div>
<div class="t" style="right:506.5px;top:362px;text-align:right;line-height:14px;">18</div>
<div class="t" style="right:475.5px;top:362px;text-align:right;line-height:14px;">19</div>
<div class="t" style="right:444.5px;top:362px;text-align:right;line-height:14px;">20</div>
<div class="t" style="right:412.5px;top:362px;text-align:right;line-height:14px;">21</div>
<div class="t" style="right:381.5px;top:362px;text-align:right;line-height:14px;">22</div>
<div class="t" style="right:568.5px;top:376px;text-align:right;color:#f00;line-height:14px;">23</div>
<div class="t" style="right:537.5px;top:376px;text-align:right;line-height:14px;">24</div>
<div class="t" style="right:506.5px;top:376px;text-align:right;line-height:14px;">25</div>
<div class="t" style="right:475.5px;top:376px;text-align:right;line-height:14px;">26</div>
<div class="t" style="right:444.5px;top:376px;text-align:right;line-height:14px;">27</div>
<div class="t" style="right:412.5px;top:376px;text-align:right;line-height:14px;">28</div>
<div class="t" style="right:381.5px;top:376px;text-align:right;line-height:14px;">29</div>
<div class="t" style="right:568.5px;top:390px;text-align:right;color:#f00;line-height:14px;">30</div>
<div class="t" style="right:537.5px;top:390px;text-align:right;line-height:14px;">31</div>
<div class="t" style="left:234.0px;width:200px;top:423px;text-align:center;font-weight:bold;font-size:12px;line-height:15px;">February 2005</div>
<div class="a" style="left:224px;top:440px;width:220px;height:1px;background:#7b7868"></div>
<div class="t" style="right:794.5px;top:442px;text-align:right;line-height:14px;">Sun</div>
<div class="t" style="right:763.5px;top:442px;text-align:right;line-height:14px;">Mon</div>
<div class="t" style="right:732.5px;top:442px;text-align:right;line-height:14px;">Tue</div>
<div class="t" style="right:701.5px;top:442px;text-align:right;line-height:14px;">Wed</div>
<div class="t" style="right:670.5px;top:442px;text-align:right;line-height:14px;">Thu</div>
<div class="t" style="right:638.5px;top:442px;text-align:right;line-height:14px;">Fri</div>
<div class="t" style="right:607.5px;top:442px;text-align:right;line-height:14px;">Sat</div>
<div class="a" style="left:225px;top:457px;width:218px;height:1px;background:#7b7868"></div>
<div class="t" style="right:732.5px;top:458px;text-align:right;line-height:14px;">1</div>
<div class="t" style="right:701.5px;top:458px;text-align:right;line-height:14px;">2</div>
<div class="t" style="right:670.5px;top:458px;text-align:right;line-height:14px;">3</div>
<div class="t" style="right:638.5px;top:458px;text-align:right;line-height:14px;">4</div>
<div class="t" style="right:607.5px;top:458px;text-align:right;line-height:14px;">5</div>
<div class="t" style="right:794.5px;top:474px;text-align:right;color:#f00;line-height:14px;">6</div>
<div class="t" style="right:763.5px;top:474px;text-align:right;line-height:14px;">7</div>
<div class="t" style="right:732.5px;top:474px;text-align:right;line-height:14px;">8</div>
<div class="t" style="right:701.5px;top:474px;text-align:right;line-height:14px;">9</div>
<div class="t" style="right:670.5px;top:474px;text-align:right;line-height:14px;">10</div>
<div class="t" style="right:638.5px;top:474px;text-align:right;line-height:14px;">11</div>
<div class="t" style="right:607.5px;top:474px;text-align:right;line-height:14px;">12</div>
<div class="t" style="right:794.5px;top:490px;text-align:right;color:#f00;line-height:14px;">13</div>
<div class="t" style="right:763.5px;top:490px;text-align:right;line-height:14px;">14</div>
<div class="t" style="right:732.5px;top:490px;text-align:right;line-height:14px;">15</div>
<div class="t" style="right:701.5px;top:490px;text-align:right;line-height:14px;">16</div>
<div class="t" style="right:670.5px;top:490px;text-align:right;line-height:14px;">17</div>
<div class="t" style="right:638.5px;top:490px;text-align:right;line-height:14px;">18</div>
<div class="t" style="right:607.5px;top:490px;text-align:right;line-height:14px;">19</div>
<div class="t" style="right:794.5px;top:506px;text-align:right;color:#f00;line-height:14px;">20</div>
<div class="t" style="right:763.5px;top:506px;text-align:right;line-height:14px;">21</div>
<div class="t" style="right:732.5px;top:506px;text-align:right;line-height:14px;">22</div>
<div class="t" style="right:701.5px;top:506px;text-align:right;line-height:14px;">23</div>
<div class="t" style="right:670.5px;top:506px;text-align:right;line-height:14px;">24</div>
<div class="t" style="right:638.5px;top:506px;text-align:right;line-height:14px;">25</div>
<div class="t" style="right:607.5px;top:506px;text-align:right;line-height:14px;">26</div>
<div class="t" style="right:794.5px;top:522px;text-align:right;color:#f00;line-height:14px;">27</div>
<div class="t" style="right:763.5px;top:522px;text-align:right;line-height:14px;">28</div>
<div class="t" style="left:460.0px;width:200px;top:423px;text-align:center;font-weight:bold;font-size:12px;line-height:15px;">March 2005</div>
<div class="a" style="left:450px;top:440px;width:220px;height:1px;background:#7b7868"></div>
<div class="t" style="right:568.5px;top:442px;text-align:right;line-height:14px;">Sun</div>
<div class="t" style="right:537.5px;top:442px;text-align:right;line-height:14px;">Mon</div>
<div class="t" style="right:506.5px;top:442px;text-align:right;line-height:14px;">Tue</div>
<div class="t" style="right:475.5px;top:442px;text-align:right;line-height:14px;">Wed</div>
<div class="t" style="right:444.5px;top:442px;text-align:right;line-height:14px;">Thu</div>
<div class="t" style="right:412.5px;top:442px;text-align:right;line-height:14px;">Fri</div>
<div class="t" style="right:381.5px;top:442px;text-align:right;line-height:14px;">Sat</div>
<div class="a" style="left:451px;top:457px;width:218px;height:1px;background:#7b7868"></div>
<div class="t" style="right:506.5px;top:458px;text-align:right;line-height:14px;">1</div>
<div class="t" style="right:475.5px;top:458px;text-align:right;line-height:14px;">2</div>
<div class="t" style="right:444.5px;top:458px;text-align:right;line-height:14px;">3</div>
<div class="t" style="right:412.5px;top:458px;text-align:right;line-height:14px;">4</div>
<div class="t" style="right:381.5px;top:458px;text-align:right;line-height:14px;">5</div>
<div class="t" style="right:568.5px;top:474px;text-align:right;color:#f00;line-height:14px;">6</div>
<div class="t" style="right:537.5px;top:474px;text-align:right;line-height:14px;">7</div>
<div class="t" style="right:506.5px;top:474px;text-align:right;line-height:14px;">8</div>
<div class="t" style="right:475.5px;top:474px;text-align:right;line-height:14px;">9</div>
<div class="t" style="right:444.5px;top:474px;text-align:right;line-height:14px;">10</div>
<div class="t" style="right:412.5px;top:474px;text-align:right;line-height:14px;">11</div>
<div class="t" style="right:381.5px;top:474px;text-align:right;line-height:14px;">12</div>
<div class="t" style="right:568.5px;top:490px;text-align:right;color:#f00;line-height:14px;">13</div>
<div class="t" style="right:537.5px;top:490px;text-align:right;line-height:14px;">14</div>
<div class="t" style="right:506.5px;top:490px;text-align:right;line-height:14px;">15</div>
<div class="t" style="right:475.5px;top:490px;text-align:right;line-height:14px;">16</div>
<div class="t" style="right:444.5px;top:490px;text-align:right;line-height:14px;">17</div>
<div class="t" style="right:412.5px;top:490px;text-align:right;line-height:14px;">18</div>
<div class="t" style="right:381.5px;top:490px;text-align:right;line-height:14px;">19</div>
<div class="t" style="right:568.5px;top:506px;text-align:right;color:#f00;line-height:14px;">20</div>
<div class="t" style="right:537.5px;top:506px;text-align:right;line-height:14px;">21</div>
<div class="t" style="right:506.5px;top:506px;text-align:right;line-height:14px;">22</div>
<div class="t" style="right:475.5px;top:506px;text-align:right;line-height:14px;">23</div>
<div class="t" style="right:444.5px;top:506px;text-align:right;line-height:14px;">24</div>
<div class="t" style="right:412.5px;top:506px;text-align:right;line-height:14px;">25</div>
<div class="t" style="right:381.5px;top:506px;text-align:right;line-height:14px;">26</div>
<div class="t" style="right:568.5px;top:522px;text-align:right;color:#f00;line-height:14px;">27</div>
<div class="t" style="right:537.5px;top:522px;text-align:right;line-height:14px;">28</div>
<div class="t" style="right:506.5px;top:522px;text-align:right;line-height:14px;">29</div>
<div class="t" style="right:475.5px;top:522px;text-align:right;line-height:14px;">30</div>
<div class="t" style="right:444.5px;top:522px;text-align:right;line-height:14px;">31</div>
<div class="t" style="right:412.5px;top:522px;text-align:right;color:#808080;line-height:14px;">1</div>
<div class="t" style="right:381.5px;top:522px;text-align:right;color:#808080;line-height:14px;">2</div>
<div class="t" style="right:568.5px;top:538px;text-align:right;color:#ffafaf;line-height:14px;">3</div>
<div class="t" style="right:537.5px;top:538px;text-align:right;color:#808080;line-height:14px;">4</div>
<div class="t" style="right:506.5px;top:538px;text-align:right;color:#808080;line-height:14px;">5</div>
<div class="t" style="right:475.5px;top:538px;text-align:right;color:#808080;line-height:14px;">6</div>
<div class="t" style="right:444.5px;top:538px;text-align:right;color:#808080;line-height:14px;">7</div>
<div class="t" style="right:412.5px;top:538px;text-align:right;color:#808080;line-height:14px;">8</div>
<div class="t" style="right:381.5px;top:538px;text-align:right;color:#808080;line-height:14px;">9</div>
<svg style="left:0;top:0" width="1048" height="758" viewBox="0 0 1048 758"><path d="M233 151 L228 155 L233 159 Z" fill="#a8a8a8"/><path d="M233 151 L228 155" stroke="#3a3a20" stroke-width="1"/><path d="M239 151 L234 155 L239 159 Z" fill="#a8a8a8"/><path d="M239 151 L234 155" stroke="#3a3a20" stroke-width="1"/><path d="M256 151 L251 155 L256 159 Z" fill="#a8a8a8"/><path d="M256 151 L251 155" stroke="#3a3a20" stroke-width="1"/><path d="M277 151 L272 155 L277 159 Z" fill="#a8a8a8"/><path d="M277 151 L272 155" stroke="#3a3a20" stroke-width="1"/><text x="268" y="162" font-family="Liberation Sans" font-size="7" font-weight="bold" fill="#666">7</text><path d="M616.5 151 L621.5 155 L616.5 159 Z" fill="#a8a8a8"/><path d="M616.5 151 L621.5 155" stroke="#2a2a18" stroke-width="1"/><text x="621" y="162" font-family="Liberation Sans" font-size="7" font-weight="bold" fill="#666">7</text><path d="M638 151 L643 155 L638 159 Z" fill="#a8a8a8"/><path d="M638 151 L643 155" stroke="#2a2a18" stroke-width="1"/><path d="M655 151 L660 155 L655 159 Z" fill="#a8a8a8"/><path d="M655 151 L660 155" stroke="#2a2a18" stroke-width="1"/><path d="M661 151 L666 155 L661 159 Z" fill="#a8a8a8"/><path d="M661 151 L666 155" stroke="#2a2a18" stroke-width="1"/></svg>
<div class="a" style="left:223px;top:555px;width:448px;height:1px;background:#7b7868"></div>
<div class="t" style="left:361px;top:563px;line-height:14px;">Today: October 22, 2004</div>
<div class="a" style="left:623px;top:557px;width:48px;height:26px;border:1px solid #7f7f7a;border-radius:3px;background:linear-gradient(to right,rgba(255,255,255,0.5) 0,rgba(255,255,255,0) 15%,rgba(0,0,0,0) 80%,rgba(120,115,90,0.18) 100%),linear-gradient(to bottom,#fdfdfa 0,#f3f2ea 40%,#e8e6da 85%,#d8d4c6 100%)"></div>
<div class="t" style="left:623.0px;width:48px;top:563px;text-align:center;line-height:14px;">OK</div>
<div class="a" style="left:784px;top:93px;width:249px;height:630px;background:#fff;border:1px solid #808080"></div>
<div class="a" style="left:785px;top:94px;width:123px;height:18px;background:#ebe8d7;border-top:1px solid #fff;border-left:1px solid #fff;border-right:1px solid #858580;border-bottom:1px solid #858580"></div>
<div class="a" style="left:908px;top:94px;width:123px;height:18px;background:#ebe8d7;border-top:1px solid #fff;border-left:1px solid #fff;border-right:1px solid #858580;border-bottom:1px solid #858580"></div>
<div class="t" style="left:785.0px;width:122px;top:96px;text-align:center;line-height:14px;">Name</div>
<div class="t" style="left:908.0px;width:122px;top:96px;text-align:center;line-height:14px;">Value</div>
<div class="a" style="left:785px;top:127px;width:246px;height:1px;background:#ece9d8"></div>
<div class="t" style="left:786px;top:112px;line-height:14px;letter-spacing:-0.2px">about</div>
<div class="t" style="left:910px;top:112px;line-height:14px;">Components! Calenda...</div>
<div class="a" style="left:785px;top:143px;width:246px;height:1px;background:#ece9d8"></div>
<div class="t" style="left:786px;top:128px;line-height:14px;letter-spacing:-0.2px">allowSelectOffMonthD<span style="letter-spacing:1.2px">...</span></div>
<div class="a" style="left:909px;top:129px;width:13px;height:13px;border:1px solid #7f7f7f;background:linear-gradient(135deg,#e0ded2 0,#f4f3ee 60%,#fff 100%)"></div>
<svg style="left:909px;top:129px" width="13" height="13" viewBox="0 0 13 13"><path d="M3 4.6 L5.5 7.1 L10.2 2.4 L10.2 5.6 L5.5 10.2 L3 7.7 Z" fill="#21a121" stroke="#21a121" stroke-width="0.4" stroke-linejoin="round"/></svg>
<div class="a" style="left:785px;top:159px;width:246px;height:1px;background:#ece9d8"></div>
<div class="t" style="left:786px;top:144px;line-height:14px;letter-spacing:-0.2px">background</div>
<div class="a" style="left:910px;top:147px;width:33px;height:10px;background:#ece9d8;border:1px solid #000"></div>
<div class="t" style="left:945px;top:144px;line-height:14px;letter-spacing:0.3px">[236, 233, 216]</div>
<div class="a" style="left:785px;top:175px;width:246px;height:1px;background:#ece9d8"></div>
<div class="t" style="left:786px;top:160px;line-height:14px;letter-spacing:-0.2px">calendarsAmount</div>
<div class="t" style="left:910px;top:160px;line-height:14px;">6</div>
<div class="a" style="left:785px;top:176px;width:123px;height:15px;background:#316ac5"></div>
<div class="a" style="left:909px;top:176px;width:122px;height:15px;background:#316ac5"></div>
<div class="a" style="left:785px;top:191px;width:246px;height:1px;background:#ece9d8"></div>
<div class="t" style="left:786px;top:176px;color:#fff;line-height:14px;letter-spacing:-0.2px">captionForeground</div>
<div class="a" style="left:910px;top:179px;width:33px;height:10px;background:#000;border:1px solid #000"></div>
<div class="t" style="left:945px;top:176px;color:#fff;line-height:14px;">Black</div>
<div class="a" style="left:785px;top:207px;width:246px;height:1px;background:#ece9d8"></div>
<div class="t" style="left:786px;top:192px;line-height:14px;letter-spacing:-0.2px">dateProperties</div>
<div class="t" style="left:910px;top:192px;line-height:14px;">Fri Oct 22 00:00:00 E...</div>
<div class="a" style="left:785px;top:223px;width:246px;height:1px;background:#ece9d8"></div>
<div class="t" style="left:786px;top:208px;line-height:14px;letter-spacing:-0.2px">firstMonth</div>
<div class="t" style="left:910px;top:208px;line-height:14px;">October</div>
<div class="a" style="left:785px;top:239px;width:246px;height:1px;background:#ece9d8"></div>
<div class="t" style="left:786px;top:224px;line-height:14px;letter-spacing:-0.2px">foreground</div>
<div class="a" style="left:910px;top:227px;width:33px;height:10px;background:#000;border:1px solid #000"></div>
<div class="t" style="left:945px;top:224px;line-height:14px;">Black</div>
<div class="a" style="left:785px;top:255px;width:246px;height:1px;background:#ece9d8"></div>
<div class="t" style="left:786px;top:240px;line-height:14px;letter-spacing:-0.2px">gridColor</div>
<div class="a" style="left:910px;top:243px;width:33px;height:10px;background:#ece9d8;border:1px solid #000"></div>
<div class="t" style="left:945px;top:240px;line-height:14px;letter-spacing:0.3px">[236, 233, 216]</div>
<div class="a" style="left:785px;top:271px;width:246px;height:1px;background:#ece9d8"></div>
<div class="t" style="left:786px;top:256px;line-height:14px;letter-spacing:-0.2px">headerForeground</div>
<div class="a" style="left:910px;top:259px;width:33px;height:10px;background:#000;border:1px solid #000"></div>
<div class="t" style="left:945px;top:256px;line-height:14px;">Black</div>
<div class="a" style="left:785px;top:287px;width:246px;height:1px;background:#ece9d8"></div>
<div class="t" style="left:786px;top:272px;line-height:14px;letter-spacing:-0.2px">locale</div>
<div class="t" style="left:910px;top:272px;line-height:14px;">English (United States)</div>
<div class="a" style="left:785px;top:303px;width:246px;height:1px;background:#ece9d8"></div>
<div class="t" style="left:786px;top:288px;line-height:14px;letter-spacing:-0.2px">monthNavigatorVisible</div>
<div class="a" style="left:909px;top:289px;width:13px;height:13px;border:1px solid #7f7f7f;background:linear-gradient(135deg,#e0ded2 0,#f4f3ee 60%,#fff 100%)"></div>
<svg style="left:909px;top:289px" width="13" height="13" viewBox="0 0 13 13"><path d="M3 4.6 L5.5 7.1 L10.2 2.4 L10.2 5.6 L5.5 10.2 L3 7.7 Z" fill="#21a121" stroke="#21a121" stroke-width="0.4" stroke-linejoin="round"/></svg>
<div class="a" style="left:785px;top:319px;width:246px;height:1px;background:#ece9d8"></div>
<div class="t" style="left:786px;top:304px;line-height:14px;letter-spacing:-0.2px">offMonthWeekdayBac<span style="letter-spacing:1.2px">...</span></div>
<div class="a" style="left:910px;top:307px;width:33px;height:10px;background:#ece9d8;border:1px solid #000"></div>
<div class="t" style="left:945px;top:304px;line-height:14px;letter-spacing:0.3px">[236, 233, 216]</div>
<div class="a" style="left:785px;top:335px;width:246px;height:1px;background:#ece9d8"></div>
<div class="t" style="left:786px;top:320px;line-height:14px;letter-spacing:-0.2px">offMonthWeekdayFor<span style="letter-spacing:1.2px">...</span></div>
<div class="a" style="left:910px;top:323px;width:33px;height:10px;background:#808080;border:1px solid #000"></div>
<div class="t" style="left:945px;top:320px;line-height:14px;">Gray</div>
<div class="a" style="left:785px;top:351px;width:246px;height:1px;background:#ece9d8"></div>
<div class="t" style="left:786px;top:336px;line-height:14px;letter-spacing:-0.2px">offMonthWeekendBac<span style="letter-spacing:1.2px">...</span></div>
<div class="a" style="left:910px;top:339px;width:33px;height:10px;background:#ece9d8;border:1px solid #000"></div>
<div class="t" style="left:945px;top:336px;line-height:14px;letter-spacing:0.3px">[236, 233, 216]</div>
<div class="a" style="left:785px;top:367px;width:246px;height:1px;background:#ece9d8"></div>
<div class="t" style="left:786px;top:352px;line-height:14px;letter-spacing:-0.2px">offMonthWeekendFor<span style="letter-spacing:1.2px">...</span></div>
<div class="a" style="left:910px;top:355px;width:33px;height:10px;background:#ffafaf;border:1px solid #000"></div>
<div class="t" style="left:945px;top:352px;line-height:14px;">Pink</div>
<div class="a" style="left:785px;top:383px;width:246px;height:1px;background:#ece9d8"></div>
<div class="t" style="left:786px;top:368px;line-height:14px;letter-spacing:-0.2px">okButtonVisible</div>
<div class="a" style="left:909px;top:369px;width:13px;height:13px;border:1px solid #7f7f7f;background:linear-gradient(135deg,#e0ded2 0,#f4f3ee 60%,#fff 100%)"></div>
<svg style="left:909px;top:369px" width="13" height="13" viewBox="0 0 13 13"><path d="M3 4.6 L5.5 7.1 L10.2 2.4 L10.2 5.6 L5.5 10.2 L3 7.7 Z" fill="#21a121" stroke="#21a121" stroke-width="0.4" stroke-linejoin="round"/></svg>
<div class="a" style="left:785px;top:399px;width:246px;height:1px;background:#ece9d8"></div>
<div class="t" style="left:786px;top:384px;line-height:14px;letter-spacing:-0.2px">preserveCurrentDate</div>
<div class="a" style="left:909px;top:385px;width:13px;height:13px;border:1px solid #7f7f7f;background:linear-gradient(135deg,#e0ded2 0,#f4f3ee 60%,#fff 100%)"></div>
<svg style="left:909px;top:385px" width="13" height="13" viewBox="0 0 13 13"><path d="M3 4.6 L5.5 7.1 L10.2 2.4 L10.2 5.6 L5.5 10.2 L3 7.7 Z" fill="#21a121" stroke="#21a121" stroke-width="0.4" stroke-linejoin="round"/></svg>
<div class="a" style="left:785px;top:415px;width:246px;height:1px;background:#ece9d8"></div>
<div class="t" style="left:786px;top:400px;line-height:14px;letter-spacing:-0.2px">rows</div>
<div class="t" style="left:910px;top:400px;line-height:14px;">3</div>
<div class="a" style="left:785px;top:431px;width:246px;height:1px;background:#ece9d8"></div>
<div class="t" style="left:786px;top:416px;line-height:14px;letter-spacing:-0.2px">shortDayCaption</div>
<div class="a" style="left:909px;top:417px;width:13px;height:13px;border:1px solid #7f7f7f;background:linear-gradient(135deg,#e0ded2 0,#f4f3ee 60%,#fff 100%)"></div>
<div class="a" style="left:785px;top:447px;width:246px;height:1px;background:#ece9d8"></div>
<div class="t" style="left:786px;top:432px;line-height:14px;letter-spacing:-0.2px">showBottomDelimiter</div>
<div class="a" style="left:909px;top:433px;width:13px;height:13px;border:1px solid #7f7f7f;background:linear-gradient(135deg,#e0ded2 0,#f4f3ee 60%,#fff 100%)"></div>
<svg style="left:909px;top:433px" width="13" height="13" viewBox="0 0 13 13"><path d="M3 4.6 L5.5 7.1 L10.2 2.4 L10.2 5.6 L5.5 10.2 L3 7.7 Z" fill="#21a121" stroke="#21a121" stroke-width="0.4" stroke-linejoin="round"/></svg>
<div class="a" style="left:785px;top:463px;width:246px;height:1px;background:#ece9d8"></div>
<div class="t" style="left:786px;top:448px;line-height:14px;letter-spacing:-0.2px">showGrid</div>
<div class="a" style="left:909px;top:449px;width:13px;height:13px;border:1px solid #7f7f7f;background:linear-gradient(135deg,#e0ded2 0,#f4f3ee 60%,#fff 100%)"></div>
<div class="a" style="left:785px;top:479px;width:246px;height:1px;background:#ece9d8"></div>
<div class="t" style="left:786px;top:464px;line-height:14px;letter-spacing:-0.2px">showHorizontalLines</div>
<div class="a" style="left:909px;top:465px;width:13px;height:13px;border:1px solid #7f7f7f;background:linear-gradient(135deg,#e0ded2 0,#f4f3ee 60%,#fff 100%)"></div>
<div class="a" style="left:785px;top:495px;width:246px;height:1px;background:#ece9d8"></div>
<div class="t" style="left:786px;top:480px;line-height:14px;letter-spacing:-0.2px">showOffMonthDays</div>
<div class="a" style="left:909px;top:481px;width:13px;height:13px;border:1px solid #7f7f7f;background:linear-gradient(135deg,#e0ded2 0,#f4f3ee 60%,#fff 100%)"></div>
<svg style="left:909px;top:481px" width="13" height="13" viewBox="0 0 13 13"><path d="M3 4.6 L5.5 7.1 L10.2 2.4 L10.2 5.6 L5.5 10.2 L3 7.7 Z" fill="#21a121" stroke="#21a121" stroke-width="0.4" stroke-linejoin="round"/></svg>
<div class="a" style="left:785px;top:511px;width:246px;height:1px;background:#ece9d8"></div>
<div class="t" style="left:786px;top:496px;line-height:14px;letter-spacing:-0.2px">showVerticalLines</div>
<div class="a" style="left:909px;top:497px;width:13px;height:13px;border:1px solid #7f7f7f;background:linear-gradient(135deg,#e0ded2 0,#f4f3ee 60%,#fff 100%)"></div>
<div class="a" style="left:785px;top:527px;width:246px;height:1px;background:#ece9d8"></div>
<div class="t" style="left:786px;top:512px;line-height:14px;letter-spacing:-0.2px">todayBorderColor</div>
<div class="a" style="left:910px;top:515px;width:33px;height:10px;background:#f00;border:1px solid #000"></div>
<div class="t" style="left:945px;top:512px;line-height:14px;">Red</div>
<div class="a" style="left:785px;top:543px;width:246px;height:1px;background:#ece9d8"></div>
<div class="t" style="left:786px;top:528px;line-height:14px;letter-spacing:-0.2px">todayBorderThickness</div>
<div class="t" style="left:910px;top:528px;line-height:14px;">1</div>
<div class="a" style="left:785px;top:559px;width:246px;height:1px;background:#ece9d8"></div>
<div class="t" style="left:786px;top:544px;line-height:14px;letter-spacing:-0.2px">todayButtonVisible</div>
<div class="a" style="left:909px;top:545px;width:13px;height:13px;border:1px solid #7f7f7f;background:linear-gradient(135deg,#e0ded2 0,#f4f3ee 60%,#fff 100%)"></div>
<svg style="left:909px;top:545px" width="13" height="13" viewBox="0 0 13 13"><path d="M3 4.6 L5.5 7.1 L10.2 2.4 L10.2 5.6 L5.5 10.2 L3 7.7 Z" fill="#21a121" stroke="#21a121" stroke-width="0.4" stroke-linejoin="round"/></svg>
<div class="a" style="left:785px;top:575px;width:246px;height:1px;background:#ece9d8"></div>
<div class="t" style="left:786px;top:560px;line-height:14px;letter-spacing:-0.2px">weekNavigatorVisible</div>
<div class="a" style="left:909px;top:561px;width:13px;height:13px;border:1px solid #7f7f7f;background:linear-gradient(135deg,#e0ded2 0,#f4f3ee 60%,#fff 100%)"></div>
<svg style="left:909px;top:561px" width="13" height="13" viewBox="0 0 13 13"><path d="M3 4.6 L5.5 7.1 L10.2 2.4 L10.2 5.6 L5.5 10.2 L3 7.7 Z" fill="#21a121" stroke="#21a121" stroke-width="0.4" stroke-linejoin="round"/></svg>
<div class="a" style="left:785px;top:591px;width:246px;height:1px;background:#ece9d8"></div>
<div class="t" style="left:786px;top:576px;line-height:14px;letter-spacing:-0.2px">weekendBackground</div>
<div class="a" style="left:910px;top:579px;width:33px;height:10px;background:#ece9d8;border:1px solid #000"></div>
<div class="t" style="left:945px;top:576px;line-height:14px;letter-spacing:0.3px">[236, 233, 216]</div>
<div class="a" style="left:785px;top:607px;width:246px;height:1px;background:#ece9d8"></div>
<div class="t" style="left:786px;top:592px;line-height:14px;letter-spacing:-0.2px">weekendForeground</div>
<div class="a" style="left:910px;top:595px;width:33px;height:10px;background:#f00;border:1px solid #000"></div>
<div class="t" style="left:945px;top:592px;line-height:14px;">Red</div>
<div class="a" style="left:785px;top:623px;width:246px;height:1px;background:#ece9d8"></div>
<div class="t" style="left:786px;top:608px;line-height:14px;letter-spacing:-0.2px">yearNavigatorVisible</div>
<div class="a" style="left:909px;top:609px;width:13px;height:13px;border:1px solid #7f7f7f;background:linear-gradient(135deg,#e0ded2 0,#f4f3ee 60%,#fff 100%)"></div>
<svg style="left:909px;top:609px" width="13" height="13" viewBox="0 0 13 13"><path d="M3 4.6 L5.5 7.1 L10.2 2.4 L10.2 5.6 L5.5 10.2 L3 7.7 Z" fill="#21a121" stroke="#21a121" stroke-width="0.4" stroke-linejoin="round"/></svg>
<div class="a" style="left:908px;top:112px;width:1px;height:512px;background:#ece9d8"></div>
<div class="a" style="left:112px;top:378px;width:1px;height:1px;background:#808080"></div>
<div class="a" style="left:113px;top:379px;width:1px;height:1px;background:#fff"></div>
<div class="a" style="left:781px;top:378px;width:1px;height:1px;background:#808080"></div>
<div class="a" style="left:782px;top:379px;width:1px;height:1px;background:#fff"></div>
<div class="a" style="left:112px;top:382px;width:1px;height:1px;background:#808080"></div>
<div class="a" style="left:113px;top:383px;width:1px;height:1px;background:#fff"></div>
<div class="a" style="left:781px;top:382px;width:1px;height:1px;background:#808080"></div>
<div class="a" style="left:782px;top:383px;width:1px;height:1px;background:#fff"></div>
<div class="a" style="left:112px;top:386px;width:1px;height:1px;background:#808080"></div>
<div class="a" style="left:113px;top:387px;width:1px;height:1px;background:#fff"></div>
<div class="a" style="left:781px;top:386px;width:1px;height:1px;background:#808080"></div>
<div class="a" style="left:782px;top:387px;width:1px;height:1px;background:#fff"></div>
<div class="a" style="left:112px;top:390px;width:1px;height:1px;background:#808080"></div>
<div class="a" style="left:113px;top:391px;width:1px;height:1px;background:#fff"></div>
<div class="a" style="left:781px;top:390px;width:1px;height:1px;background:#808080"></div>
<div class="a" style="left:782px;top:391px;width:1px;height:1px;background:#fff"></div>
<div class="a" style="left:112px;top:394px;width:1px;height:1px;background:#808080"></div>
<div class="a" style="left:113px;top:395px;width:1px;height:1px;background:#fff"></div>
<div class="a" style="left:781px;top:394px;width:1px;height:1px;background:#808080"></div>
<div class="a" style="left:782px;top:395px;width:1px;height:1px;background:#fff"></div>
<div class="a" style="left:112px;top:398px;width:1px;height:1px;background:#808080"></div>
<div class="a" style="left:113px;top:399px;width:1px;height:1px;background:#fff"></div>
<div class="a" style="left:781px;top:398px;width:1px;height:1px;background:#808080"></div>
<div class="a" style="left:782px;top:399px;width:1px;height:1px;background:#fff"></div>
<div class="a" style="left:112px;top:402px;width:1px;height:1px;background:#808080"></div>
<div class="a" style="left:113px;top:403px;width:1px;height:1px;background:#fff"></div>
<div class="a" style="left:781px;top:402px;width:1px;height:1px;background:#808080"></div>
<div class="a" style="left:782px;top:403px;width:1px;height:1px;background:#fff"></div>
<div class="a" style="left:112px;top:406px;width:1px;height:1px;background:#808080"></div>
<div class="a" style="left:113px;top:407px;width:1px;height:1px;background:#fff"></div>
<div class="a" style="left:781px;top:406px;width:1px;height:1px;background:#808080"></div>
<div class="a" style="left:782px;top:407px;width:1px;height:1px;background:#fff"></div>
<div class="a" style="left:112px;top:410px;width:1px;height:1px;background:#808080"></div>
<div class="a" style="left:113px;top:411px;width:1px;height:1px;background:#fff"></div>
<div class="a" style="left:781px;top:410px;width:1px;height:1px;background:#808080"></div>
<div class="a" style="left:782px;top:411px;width:1px;height:1px;background:#fff"></div>
<div class="a" style="left:112px;top:414px;width:1px;height:1px;background:#808080"></div>
<div class="a" style="left:113px;top:415px;width:1px;height:1px;background:#fff"></div>
<div class="a" style="left:781px;top:414px;width:1px;height:1px;background:#808080"></div>
<div class="a" style="left:782px;top:415px;width:1px;height:1px;background:#fff"></div>
<div class="a" style="left:112px;top:418px;width:1px;height:1px;background:#808080"></div>
<div class="a" style="left:113px;top:419px;width:1px;height:1px;background:#fff"></div>
<div class="a" style="left:781px;top:418px;width:1px;height:1px;background:#808080"></div>
<div class="a" style="left:782px;top:419px;width:1px;height:1px;background:#fff"></div>
<div class="a" style="left:112px;top:422px;width:1px;height:1px;background:#808080"></div>
<div class="a" style="left:113px;top:423px;width:1px;height:1px;background:#fff"></div>
<div class="a" style="left:781px;top:422px;width:1px;height:1px;background:#808080"></div>
<div class="a" style="left:782px;top:423px;width:1px;height:1px;background:#fff"></div>
<div class="a" style="left:112px;top:426px;width:1px;height:1px;background:#808080"></div>
<div class="a" style="left:113px;top:427px;width:1px;height:1px;background:#fff"></div>
<div class="a" style="left:781px;top:426px;width:1px;height:1px;background:#808080"></div>
<div class="a" style="left:782px;top:427px;width:1px;height:1px;background:#fff"></div>
<div class="a" style="left:112px;top:430px;width:1px;height:1px;background:#808080"></div>
<div class="a" style="left:113px;top:431px;width:1px;height:1px;background:#fff"></div>
<div class="a" style="left:781px;top:430px;width:1px;height:1px;background:#808080"></div>
<div class="a" style="left:782px;top:431px;width:1px;height:1px;background:#fff"></div>
<div class="a" style="left:112px;top:434px;width:1px;height:1px;background:#808080"></div>
<div class="a" style="left:113px;top:435px;width:1px;height:1px;background:#fff"></div>
<div class="a" style="left:781px;top:434px;width:1px;height:1px;background:#808080"></div>
<div class="a" style="left:782px;top:435px;width:1px;height:1px;background:#fff"></div>
<div class="a" style="left:11px;top:724px;width:1023px;height:1px;background:#fff"></div>
<div class="a" style="left:12px;top:725px;width:921px;height:18px;border-top:1px solid #aca899;border-left:1px solid #aca899;border-bottom:1px solid #fff;border-right:1px solid #fff"></div>
<div class="a" style="left:934px;top:725px;width:99px;height:18px;border-top:1px solid #aca899;border-left:1px solid #aca899;border-bottom:1px solid #fff"></div>
</div></body></html>
